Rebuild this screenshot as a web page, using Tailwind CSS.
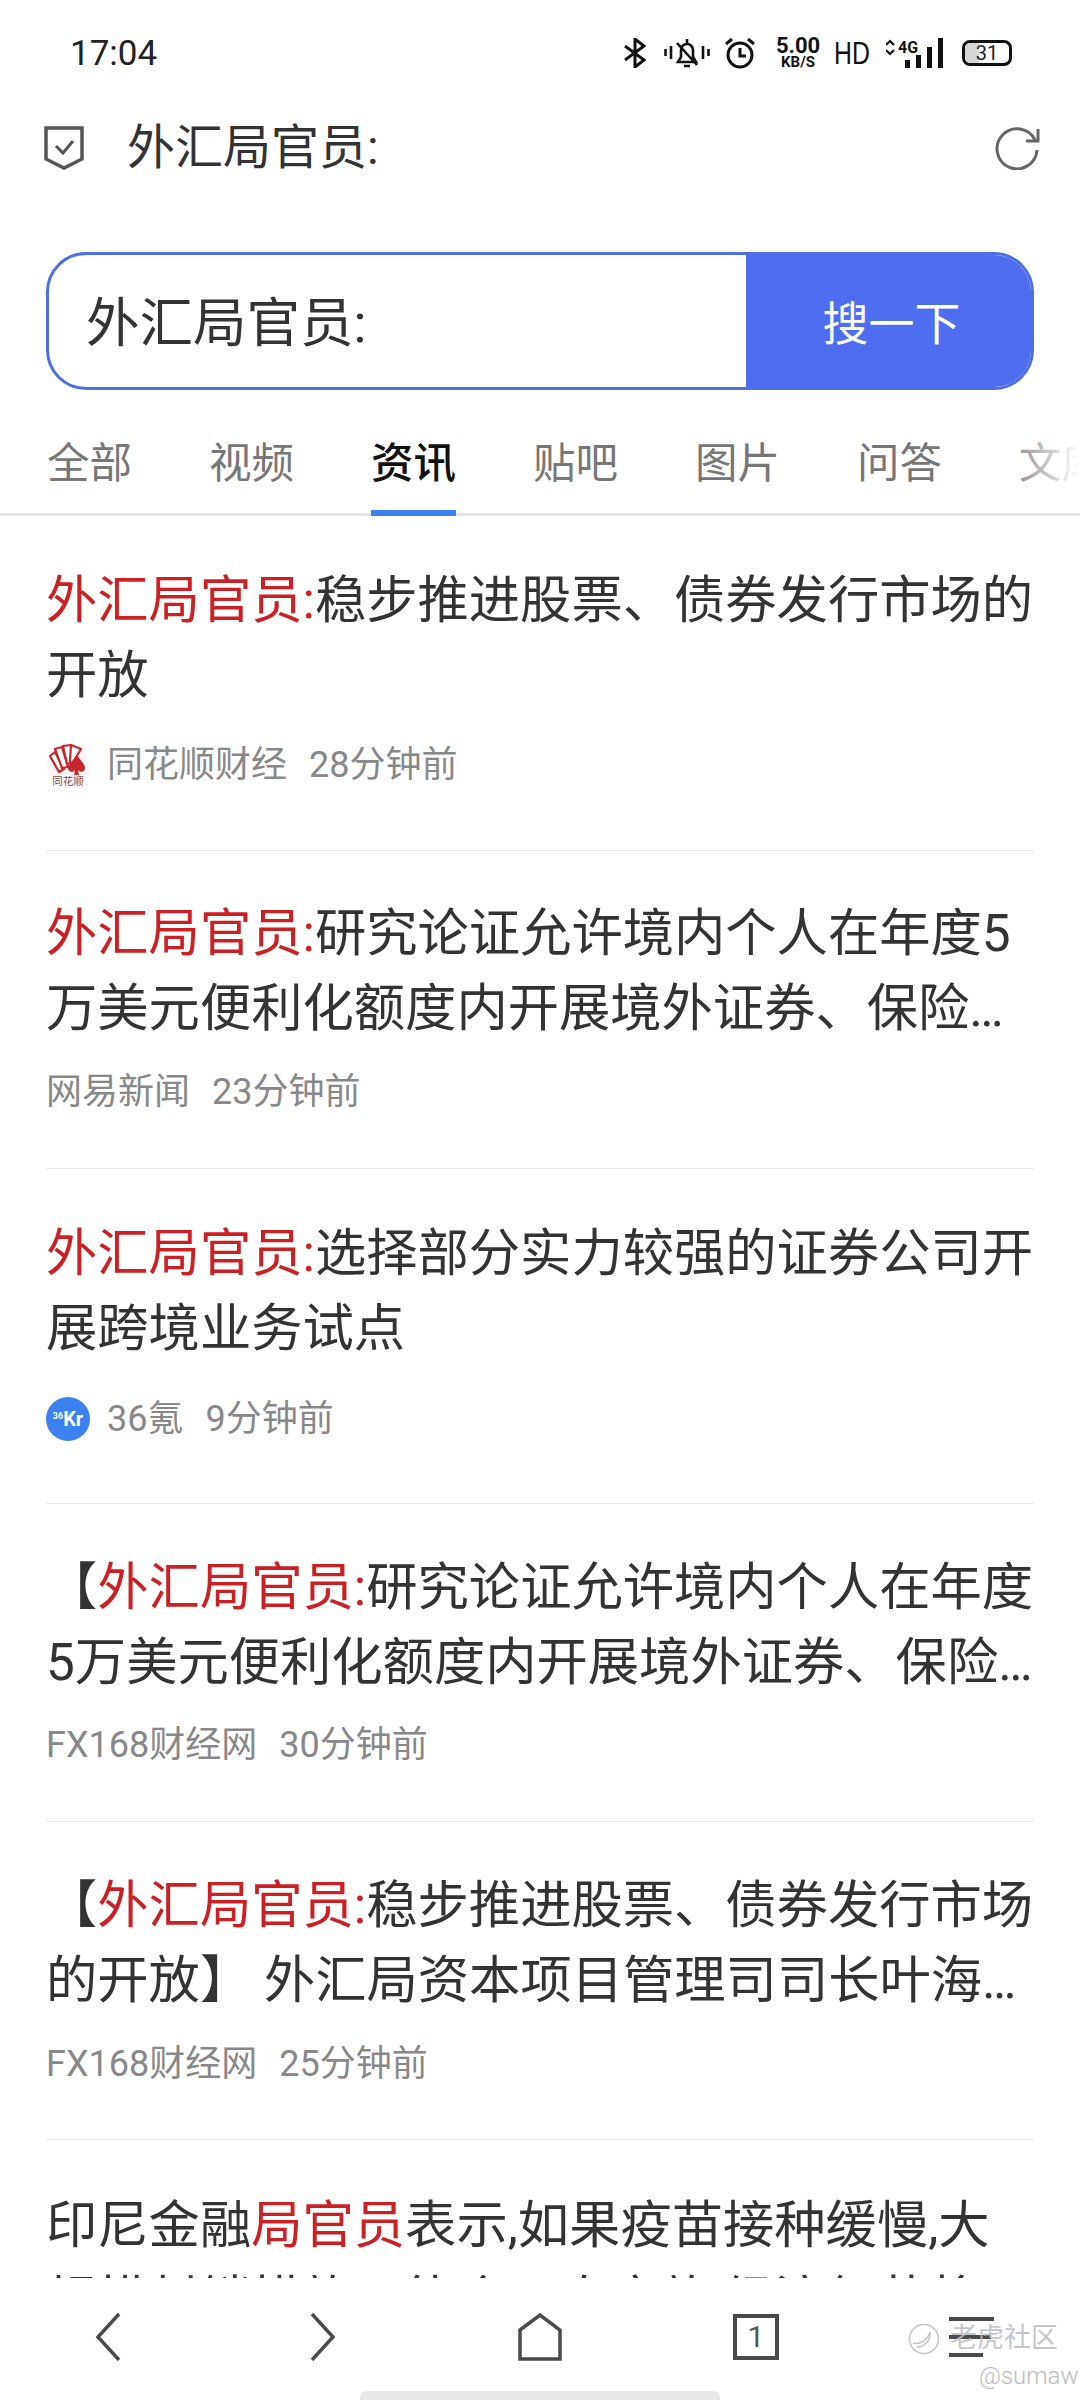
<!DOCTYPE html>
<html lang="zh-CN">
<head>
  <meta charset="UTF-8" />
  <meta name="viewport" content="width=device-width, initial-scale=1.0" />
  <title>外汇局官员:</title>
  <script src="https://cdn.jsdelivr.net/npm/@tailwindcss/browser@4"></script>
</head>
<body class="bg-white font-['Roboto','Noto_Sans_CJK_SC',sans-serif]">
  <div class="relative flex flex-col w-[1080px] h-[2400px] overflow-hidden bg-white">

    <!-- status bar -->
    <div class="flex items-center h-[106px] pl-[70px] pr-[68px] shrink-0 text-[#111]">
      <span class="text-[35px] pt-[3px] text-[#222]">17:04</span>
      <div class="ml-auto flex items-center h-[40px]">
        <svg class="w-[24px] h-[30px]" viewBox="0 0 24 30" fill="none" stroke="#111" stroke-width="3"><path d="M2 8l19 14-9 7V1l9 7L2 22" /></svg>
        <svg class="ml-[17px] w-[46px] h-[34px]" viewBox="0 0 46 34" fill="none" stroke="#111" stroke-width="2.6"><path d="M1.5 13v7M7 10v13M39 10v13M44.500 13v7" /><path d="M14 26h18l-3-5v-7a6 6 0 0 0-12 0v7zM23 3v5M20 30h6M13 7l20 22" /></svg>
        <svg class="ml-[14px] w-[32px] h-[32px]" viewBox="0 0 32 32" fill="none" stroke="#111" stroke-width="3"><circle cx="16" cy="18" r="12" /><path d="M16 11v8h6M2 7l6-5M30 7l-6-5" /></svg>
        <div class="ml-[17px] w-[50px] flex flex-col items-center font-bold leading-none font-['Roboto',sans-serif]">
          <span class="text-[22px] leading-[19px]">5.00</span>
          <span class="text-[15px] leading-[15px]">KB/S</span>
        </div>
        <span class="ml-[11px] text-[31px] leading-none font-['Liberation_Sans',sans-serif] scale-x-80 origin-left w-[39px]">HD</span>
        <svg class="ml-[13px] w-[58px] h-[32px]" viewBox="0 0 58 32" fill="none"><path d="M0 8l4-4 4 4M0 13l4 4 4-4" stroke="#111" stroke-width="2.200" /><text x="12" y="16" font-family="Roboto" font-weight="700" font-size="16" fill="#111">4G</text><path fill="#111" d="M19 23h5v8h-5zM30 18h5v13h-5zM41 10h5v21h-5zM52 1h5v30h-5z" /></svg>
        <div class="relative ml-[18px] flex items-center justify-center w-[50px] h-[26px] rounded-[8px] border-[3px] border-[#111] overflow-hidden">
          <div class="absolute left-0 top-0 h-full w-[31%] bg-[#d5d5d5]"></div>
          <span class="relative text-[20px] leading-none text-[#222]">31</span>
        </div>
      </div>
    </div>

    <!-- url bar -->
    <div class="flex items-center h-[84px] pl-[44px] pr-[40px] shrink-0">
      <svg class="w-[40px] h-[44px]" viewBox="0 0 40 44" fill="none" stroke="#555" stroke-width="3.500"><path d="M2 2h36v31l-18 9-18-9z" /><path d="M12 20l7 7 10-12" stroke-width="3" /></svg>
      <span class="ml-[43px] text-[48px] leading-none text-[#333]">外汇局官员:</span>
      <svg class="ml-auto w-[46px] h-[44px]" viewBox="0 0 46 44" fill="none" stroke="#666" stroke-width="3"><path d="M41 14A20 20 0 1 0 43 24" /><path d="M44 3v12H32" /></svg>
    </div>

    <!-- search box -->
    <div class="flex mt-[62px] mx-[46px] h-[138px] shrink-0 rounded-[40px] border-[3px] border-[#4e6ee8] overflow-hidden">
      <div class="flex-1 flex items-center pl-[37px] pt-[5px] text-[53.500px] text-[#333] leading-none">外汇局官员:</div>
      <div class="flex items-center justify-center w-[285px] pl-[6px] pt-[5px] bg-[#4e6ef2] text-white text-[46px] leading-none">搜一下</div>
    </div>

    <!-- tabs -->
    <div class="relative flex gap-[77px] h-[126px] pl-[47px] pt-[52px] shrink-0 text-[42.500px] leading-[44px] text-[#777] whitespace-nowrap overflow-hidden">
      <div class="absolute left-0 right-0 bottom-0 h-[3px] bg-[#e5e5e5]"></div>
      <span>全部</span>
      <span>视频</span>
      <span class="relative h-[74px] font-medium text-[#111] after:absolute after:left-0 after:right-0 after:bottom-0 after:h-[6px] after:bg-[#3b82f0] after:content-['']">资讯</span>
      <span>贴吧</span>
      <span>图片</span>
      <span>问答</span>
      <span class="text-[#999]">文库</span>
      <div class="absolute right-0 top-0 bottom-[3px] w-[60px] bg-gradient-to-r from-white/0 to-white"></div>
    </div>

    <!-- results -->
    <main class="flex-1 overflow-hidden px-[46px] text-[51.300px] leading-[75px] text-[#333]">
      <article class="pt-[47px] pb-[63px] border-b border-[#e5e5e5]">
        <h3 class="font-normal"><span class="text-[#cc2027]">外汇局官员:</span>稳步推进股票、债券发行市场的开放</h3>
        <div class="flex items-center mt-[30px] h-[44px] text-[36px] leading-none text-[#888]">
          <svg class="w-[44px] h-[44px] mr-[17px]" viewBox="0 0 44 44">
            <circle cx="22" cy="22" r="21.500" fill="#fdf6f6" />
            <g fill="#fff" stroke="#c9252c" stroke-width="2.200" stroke-linejoin="round"><path d="M4 13l5-4 9 17-5 3z" /><path d="M9 6l7-2 6 20-6 1z" /><path d="M17 3l8-1 2 17-6 2z" /><path d="M25 2l10 4-9 15-2-3z" /></g>
            <path fill="#c9252c" d="M31 12c3 5 8 9 8 13 0 4-5 5-7 2l1 5h-5l1-5c-2 3-7 2-7-2 0-4 6-8 9-13z" />
            <text x="22" y="42" text-anchor="middle" font-family="Noto Sans CJK SC" font-size="10.500" fill="#8a4a4a">同花顺</text>
          </svg>
          <span>同花顺财经</span><span class="ml-[22px]">28分钟前</span>
        </div>
      </article>
      <article class="pt-[45px] pb-[54px] border-b border-[#e5e5e5]">
        <h3 class="font-normal line-clamp-2"><span class="text-[#cc2027]">外汇局官员:</span>研究论证允许境内个人在年度5万美元便利化额度内开展境外证券、保险等投资</h3>
        <div class="flex items-center mt-[24px] h-[44px] text-[36px] leading-none text-[#888]">
          <span>网易新闻</span><span class="ml-[22px]">23分钟前</span>
        </div>
      </article>
      <article class="pt-[47px] pb-[62px] border-b border-[#e5e5e5]">
        <h3 class="font-normal"><span class="text-[#cc2027]">外汇局官员:</span>选择部分实力较强的证券公司开展跨境业务试点</h3>
        <div class="flex items-center mt-[31px] h-[44px] text-[36px] leading-none text-[#888]">
          <div class="flex items-center justify-center w-[44px] h-[44px] mr-[17px] rounded-full bg-[#3b82f0] text-white font-bold leading-none">
            <span class="text-[9px] mb-[6px]">36</span><span class="text-[20px]">Kr</span>
          </div>
          <span>36氪</span><span class="ml-[22px]">9分钟前</span>
        </div>
      </article>
      <article class="pt-[46px] pb-[54px] border-b border-[#e5e5e5]">
        <h3 class="font-normal line-clamp-2">【<span class="text-[#cc2027]">外汇局官员:</span>研究论证允许境内个人在年度5万美元便利化额度内开展境外证券、保险等投资</h3>
        <div class="flex items-center mt-[23px] h-[44px] text-[36px] leading-none text-[#888]">
          <span>FX168财经网</span><span class="ml-[22px]">30分钟前</span>
        </div>
      </article>
      <article class="pt-[46px] pb-[53px] border-b border-[#e5e5e5]">
        <h3 class="font-normal line-clamp-2">【<span class="text-[#cc2027]">外汇局官员:</span>稳步推进股票、债券发行市场的开放】 外汇局资本项目管理司司长叶海生表示将稳步推进</h3>
        <div class="flex items-center mt-[24px] h-[44px] text-[36px] leading-none text-[#888]">
          <span>FX168财经网</span><span class="ml-[22px]">25分钟前</span>
        </div>
      </article>
      <article class="pt-[48px]">
        <h3 class="font-normal line-clamp-2">印尼金融<span class="text-[#cc2027]">局官员</span>表示,如果疫苗接种缓慢,大规模封锁措施可能会再次实施,经济复苏将受阻</h3>
      </article>
    </main>

    <!-- bottom nav -->
    <nav class="relative flex items-start h-[122px] shrink-0 bg-white">
      <svg class="absolute left-[95px] top-[35px] w-[26px] h-[48px]" viewBox="0 0 26 48" fill="none" stroke="#4a4a4a" stroke-width="3.500"><path d="M24 1L3 24l21 23" /></svg>
      <svg class="absolute left-[310px] top-[35px] w-[26px] h-[48px]" viewBox="0 0 26 48" fill="none" stroke="#4a4a4a" stroke-width="3.500"><path d="M2 1l21 23L2 47" /></svg>
      <svg class="absolute left-[518px] top-[35px] w-[44px] h-[48px]" viewBox="0 0 44 48" fill="none" stroke="#4a4a4a" stroke-width="3.500"><path d="M2 17L22 2l20 15v29H2z" /></svg>
      <div class="absolute left-[733px] top-[36px] flex items-center justify-center w-[46px] h-[46px] border-[4px] border-[#4a4a4a] text-[#555] text-[30px] leading-none">1</div>
      <div class="absolute left-[949px] top-[39px] flex flex-col gap-[14px]">
        <div class="w-[45px] h-[4px] bg-[#4a4a4a]"></div>
        <div class="w-[42px] h-[4px] bg-[#4a4a4a]"></div>
        <div class="w-[34px] h-[4px] bg-[#4a4a4a]"></div>
      </div>
      <div class="absolute left-[360px] bottom-0 w-[360px] h-[9px] rounded-t-[6px] bg-[#e8e8e8]"></div>
    </nav>

    <!-- watermark -->
    <div class="absolute left-[908px] top-[2323px] flex items-start">
      <svg class="w-[32px] h-[32px]" viewBox="0 0 32 32" fill="none" stroke="#c4c4c4" stroke-width="1.500"><circle cx="16" cy="16" r="14.500" /><path d="M5 20c6 2 14-2 17-11 1 8-5 15-13 15" /></svg>
    </div>
    <span class="absolute left-[950px] top-[2321px] text-[27px] leading-[34px] text-[#b8bcc2]/85">老虎社区</span>
    <span class="absolute left-[979px] top-[2362px] text-[24px] leading-[28px] font-light text-[#bbb]">@sumaw</span>
  </div>
</body>
</html>
